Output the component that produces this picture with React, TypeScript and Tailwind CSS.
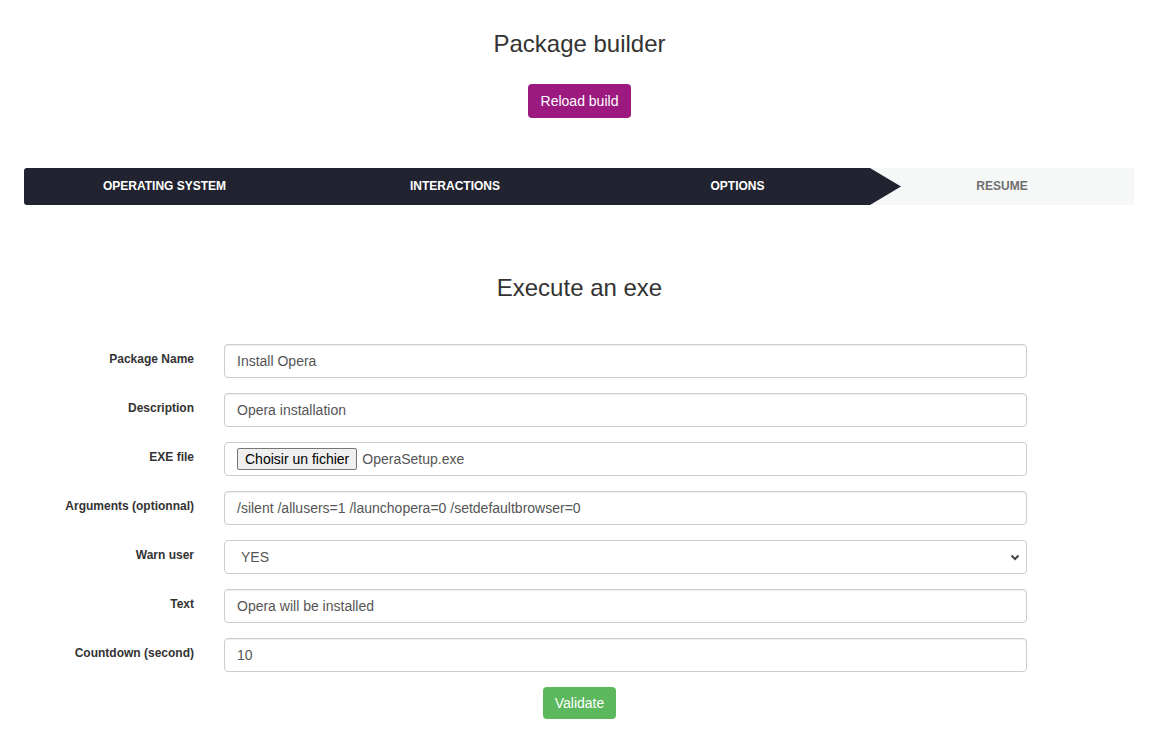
import React from "react";

const steps = [
  { label: "OPERATING SYSTEM", w: "w-[281px]", done: true },
  { label: "INTERACTIONS", w: "w-[300px]", done: true },
  { label: "OPTIONS", w: "w-[265px]", done: true },
  { label: "RESUME", w: "w-[264px]", done: false },
];

function Label({ children }: { children: React.ReactNode }) {
  return (
    <label className="w-[152px] shrink-0 pt-[7px] text-right text-[12px] font-bold leading-[17px] text-[#333]">
      {children}
    </label>
  );
}

function Row({ label, children }: { label: string; children: React.ReactNode }) {
  return (
    <div className="mb-[15px] flex">
      <Label>{label}</Label>
      <div className="ml-[30px] w-[803px]">{children}</div>
    </div>
  );
}

function TextField({ value }: { value: string }) {
  return (
    <input
      readOnly
      value={value}
      className="h-[34px] w-full rounded-[4px] border border-[#ccc] bg-white px-[12px] text-[14px] text-[#555] shadow-[inset_0_1px_1px_rgba(0,0,0,0.075)] outline-none"
    />
  );
}

export default function App() {
  return (
    <div className="min-h-screen bg-white font-['Liberation_Sans',Arial,sans-serif] text-[#333]">
      <div className="flex flex-col items-center pt-[31px]">
        <h1 className="text-[24px] font-medium leading-[26px]">Package builder</h1>
        <button className="mt-[27px] h-[34px] rounded-[4px] bg-[#9c1a80] px-[13px] text-[14px] text-white">
          Reload build
        </button>
      </div>

      {/* stepper */}
      <div className="mx-[24px] mt-[50px] flex h-[37px] text-[12px] font-bold">
        {steps.map((s, i) => (
          <div
            key={s.label}
            className={`relative flex ${s.w} items-center justify-center pb-[2px] ${
              s.done ? "bg-[#212430] text-white" : "bg-[#f6f8f8] text-[#6f6f6f]"
            } ${i === 0 ? "rounded-l-[3px]" : ""}`}
          >
            {s.label}
            {i === 2 && (
              <svg className="absolute left-full top-0 z-10" width="31" height="37" viewBox="0 0 31 37">
                <polygon points="0,0 31,18.5 0,37" fill="#212430" />
              </svg>
            )}
          </div>
        ))}
      </div>

      <h2 className="mt-[70px] text-center text-[24px] font-medium leading-[26px]">Execute an exe</h2>

      <div className="mt-[43px] pl-[42px]">
        <Row label="Package Name">
          <TextField value="Install Opera" />
        </Row>
        <Row label="Description">
          <TextField value="Opera installation" />
        </Row>
        <Row label="EXE file">
          <div className="flex h-[34px] w-full items-center rounded-[4px] border border-[#ccc] bg-white pl-[12px] text-[14px] text-[#555]">
            <span className="flex h-[22px] items-center rounded-[2px] border border-[#767676] bg-[#efefef] px-[7px] text-black">
              Choisir un fichier
            </span>
            <span className="ml-[5px]">OperaSetup.exe</span>
          </div>
        </Row>
        <Row label="Arguments (optionnal)">
          <TextField value="/silent /allusers=1 /launchopera=0 /setdefaultbrowser=0" />
        </Row>
        <Row label="Warn user">
          <div className="flex h-[34px] w-full items-center justify-between rounded-[4px] border border-[#ccc] bg-white pl-[16px] pr-[5px] text-[14px] text-[#555]">
            <span>YES</span>
            <svg width="12" height="12" viewBox="0 0 12 12">
              <path d="M2.5 4.5 L6 8 L9.5 4.5" fill="none" stroke="#444" strokeWidth="2" />
            </svg>
          </div>
        </Row>
        <Row label="Text">
          <TextField value="Opera will be installed" />
        </Row>
        <Row label="Countdown (second)">
          <TextField value="10" />
        </Row>
      </div>

      <div className="flex justify-center">
        <button className="h-[32px] rounded-[4px] bg-[#5cb85c] px-[12px] text-[14px] text-white">Validate</button>
      </div>
    </div>
  );
}
